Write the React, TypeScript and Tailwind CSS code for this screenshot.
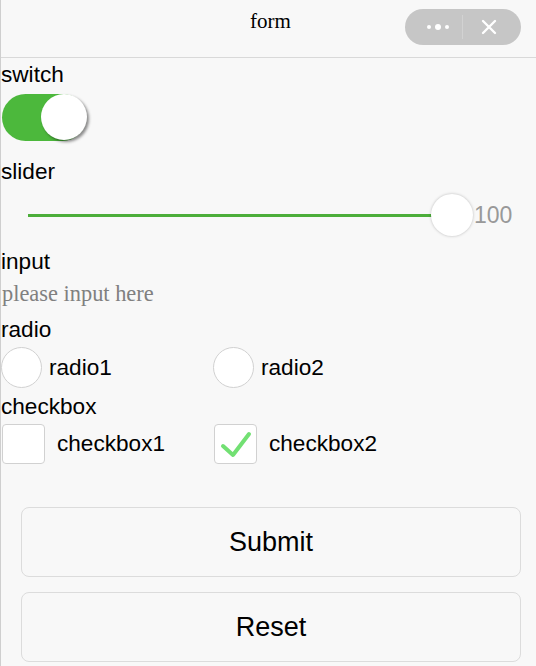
import { useState } from 'react'

const sans = "font-['Liberation_Sans',Arial,sans-serif]"
const serif = "font-['Liberation_Serif','Times_New_Roman',serif]"

function Capsule() {
  return (
    <div className="flex h-[36px] w-[116px] items-center rounded-full bg-[#c6c6c6]">
      <div className="flex w-[57px] items-center justify-center gap-[4px] pl-[8px]">
        <span className="block h-[4px] w-[4px] rounded-full bg-white" />
        <span className="block h-[6px] w-[6px] rounded-full bg-white" />
        <span className="block h-[4px] w-[4px] rounded-full bg-white" />
      </div>
      <div className="h-[24px] w-px bg-[#d2d2d2]" />
      <div className="flex flex-1 items-center justify-center pr-[6px]">
        <svg width="16" height="16" viewBox="0 0 16 16" fill="none">
          <path d="M2 2 L14 14 M14 2 L2 14" stroke="white" strokeWidth="2.4" strokeLinecap="round" />
        </svg>
      </div>
    </div>
  )
}

function Radio({ label }: { label: string }) {
  return (
    <label className="flex w-[212px] items-center gap-[7px]">
      <span className="block h-[41px] w-[41px] rounded-full border border-[#d1d1d1] bg-white" />
      <span>{label}</span>
    </label>
  )
}

function Checkbox({ label, checked }: { label: string; checked?: boolean }) {
  return (
    <label className="flex w-[212px] items-center gap-[12px]">
      <span className="flex h-[40px] w-[43px] items-center justify-center rounded-[4px] border border-[#d1d1d1] bg-white">
        {checked && (
          <svg width="32" height="28" viewBox="0 0 32 28" fill="none">
            <path d="M3 16 L13 25 L29 4" stroke="#72e073" strokeWidth="4" strokeLinecap="round" strokeLinejoin="round" />
          </svg>
        )}
      </span>
      <span>{label}</span>
    </label>
  )
}

export default function App() {
  const [on, setOn] = useState(true)
  const [value, setValue] = useState('')

  return (
    <div className={`min-h-[666px] border-l border-[#cfcfcf] bg-[#f8f8f8] text-[22.6px] text-black ${sans}`}>
      {/* navigation bar */}
      <div className="flex h-[58px] items-start border-b border-[#d9d9d9] pl-[4px]">
        <div className={`flex-1 pt-[9px] text-center text-[21px] leading-[24px] ${serif}`}>form</div>
        <div className="absolute right-[15px] top-[9px]">
          <Capsule />
        </div>
      </div>

      <div className="leading-[34px]">switch</div>
      <div className="pb-[14px] pl-[1px] pt-[2px]">
        <button
          type="button"
          onClick={() => setOn(!on)}
          className={`relative block h-[47px] w-[84px] rounded-full ${on ? 'bg-[#4cb83c]' : 'bg-[#e5e5e5]'}`}
        >
          <span
            className={`absolute top-0 block h-[46px] w-[46px] rounded-full bg-white shadow-[2px_2px_3px_rgba(0,0,0,0.45)] ${on ? 'right-[-1px]' : 'left-0'}`}
          />
        </button>
      </div>

      <div className="leading-[34px]">slider</div>
      <div className="mb-[4px] flex h-[52px] items-center pl-[27px]">
        <div className="relative h-[3px] w-[424px] bg-[#4cae3a]">
          <span className="absolute right-[-21px] top-[-20px] block h-[42px] w-[42px] rounded-full bg-white shadow-[0_0_3px_rgba(0,0,0,0.25)]" />
        </div>
        <span className="ml-[22px] text-[23px] text-[#999999]">100</span>
      </div>

      <div className="leading-[34px]">input</div>
      <input
        value={value}
        onChange={(e) => setValue(e.target.value)}
        placeholder="please input here"
        className={`mb-[5px] block h-[30px] w-full bg-transparent pl-[1px] text-[22.4px] outline-none placeholder:text-[#808080] ${serif}`}
      />

      <div className="leading-[32px]">radio</div>
      <div className="mt-px flex">
        <Radio label="radio1" />
        <Radio label="radio2" />
      </div>

      <div className="mt-[2px] leading-[34px]">checkbox</div>
      <div className="flex pl-px">
        <Checkbox label="checkbox1" />
        <Checkbox label="checkbox2" checked />
      </div>

      <div className="ml-[20px] mr-[15px] mt-[43px] flex flex-col gap-[15px] pb-[4px]">
        <button type="button" className="h-[70px] rounded-[8px] border border-[#dcdcdc] bg-[#f8f8f8] text-[27px]">
          Submit
        </button>
        <button type="button" className="h-[70px] rounded-[8px] border border-[#dcdcdc] bg-[#f8f8f8] text-[27px]">
          Reset
        </button>
      </div>
    </div>
  )
}
